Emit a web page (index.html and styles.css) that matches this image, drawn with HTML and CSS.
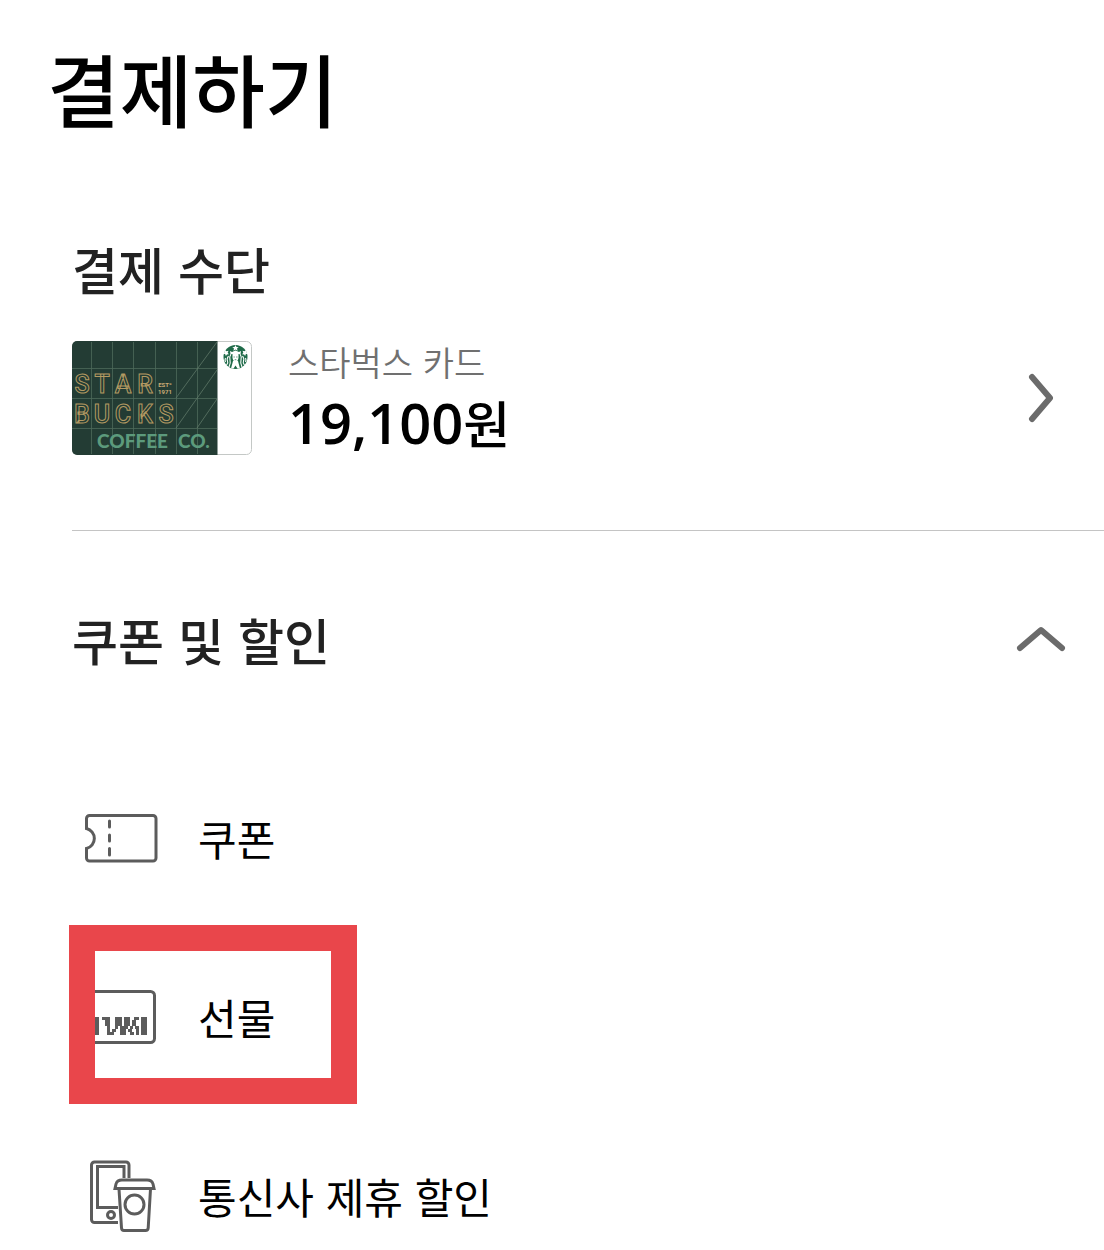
FILE: index.html
```html
<!DOCTYPE html>
<html lang="ko">
<head>
    <meta charset="UTF-8">
    <meta name="viewport" content="width=device-width, initial-scale=1.0">
    <title>결제하기</title>
    <link rel="stylesheet" href="styles.css">
</head>
<body>
    <header class="page-header">
        <h1>결제하기</h1>
    </header>

    <main>
        <section class="payment">
            <h2>결제 수단</h2>
            <a class="payment-method" href="#card">
                <svg class="card" viewBox="0 0 180 114" role="img" aria-label="스타벅스 카드">
                    <rect x="0.5" y="0.5" width="179" height="113" rx="5" fill="#fff" stroke="#c4c8c6"/>
                    <path d="M5 0H145.500V114H5a5 5 0 0 1-5-5V5a5 5 0 0 1 5-5z" fill="#233c34"/>
                    <path d="M19.500 1V113M40.500 1V113M61.500 1V113M83.500 1V113M104.500 1V113M125.500 1V113M0 27.500H145M0 57.500H145M0 87.500H145" stroke="#4c6a5b" stroke-width="0.800"/>
                    <path d="M104 57L145 1M104 87L145 29M125 87L145 58" stroke="#66806f" stroke-width="0.700"/>
                    <text class="card-outline" x="10 30 51 73" y="52">STAR</text>
                    <text class="card-outline" x="10 30 51 73 94" y="82">BUCKS</text>
                    <text class="card-est" x="93" y="46">ESTº</text>
                    <text class="card-est" x="93" y="53">1971</text>
                    <text class="card-coffee" x="25" y="107">COFFEE</text>
                    <text class="card-coffee" x="106" y="107">CO.</text>
                    <!-- siren -->
                    <circle cx="163.500" cy="16" r="12" fill="#1f6b49"/>
                    <g fill="#fff">
                        <path d="M163.500 4l1 2 2.200.2-1.700 1.400.6 2.200-2.100-1.200-2.100 1.200.6-2.200-1.700-1.400 2.200-.2z"/>
                        <path d="M158 10l2 1 3.500-1.500 3.500 1.500 2-1-.5 3h-10z"/>
                        <path d="M160.500 13h6v4q-1 4-3 4t-3-4z"/>
                        <path d="M161 20h5l2 7.500h-2.500l-2-3-2 3H159z"/>
                        <path d="M153 9l1.500 1.200 2-.5-.8 2 1.200 1.600-2 .1-1 1.700-.8-2-2-.4 1.500-1.400zM174 9l-1.500 1.200-2-.5.8 2-1.200 1.600 2 .1 1 1.700.8-2 2-.4-1.500-1.400z"/>
                    </g>
                    <path d="M159 13q-2 3-1 6t-1 7M168 13q2 3 1 6t1 7M156.500 15q-2 3-1 5t-1 4M170.500 15q2 3 1 5t1 4M153.500 17q-1 2 0 4M173.500 17q1 2 0 4" fill="none" stroke="#fff" stroke-width="1.100"/>
                    <path d="M161.500 16h1.300M164.200 16h1.300M162.700 18.700h1.600" stroke="#1f6b49" stroke-width="0.700"/>
                </svg>
                <span class="payment-info">
                    <span class="payment-name">스타벅스 카드</span>
                    <strong class="payment-balance">19,100<span class="won">원</span></strong>
                </span>
                <svg class="arrow-right" viewBox="0 0 26 50" aria-hidden="true">
                    <path d="M4 4L22 25L4 46"/>
                </svg>
            </a>
        </section>

        <section class="discount">
            <div class="discount-header">
                <h2 id="discountTitle">쿠폰 및 할인</h2>
                <button class="toggle" type="button" aria-expanded="true" aria-labelledby="discountTitle">
                    <svg viewBox="0 0 50 26" aria-hidden="true">
                        <path d="M4 22L25 4L46 22"/>
                    </svg>
                </button>
            </div>
            <ul class="discount-list">
                <li>
                    <a href="#coupon">
                        <svg class="icon" viewBox="0 0 90 72" aria-hidden="true">
                            <path d="M17.500 13.500H81a3 3 0 0 1 3 3V56a3 3 0 0 1-3 3H17.500a3 3 0 0 1-3-3V46.500a10.300 10.300 0 0 0 0-20V16.500a3 3 0 0 1 3-3z"/>
                            <path d="M37.500 19V25M37.500 33V39M37.500 46.500V53" stroke-linecap="round"/>
                        </svg>
                        <span>쿠폰</span>
                    </a>
                </li>
                <li class="marked">
                    <a href="#gift">
                        <svg class="icon" viewBox="0 0 90 72" aria-hidden="true">
                            <rect x="12.500" y="10.500" width="70" height="51" rx="4"/>
                            <path class="solid" d="M21 36h6v18h-6zM69 36h6v18h-6z
                                M30 36h8v3h-8zM43 36h7v3h-7zM52 36h6v3h-6zM62 36h5v3h-5z
                                M33 39h5v3h-5zM43 39h7v3h-7zM52 39h6v3h-6zM60 39h4v3h-4z
                                M33 42h5v3h-5zM43 42h7v3h-7zM52 42h6v3h-6zM60 42h4v3h-4z
                                M35 45h3v3h-3zM43 45h3v3h-3zM48 45h8v3h-8zM58 45h3v3h-3zM63 45h4v3h-4z
                                M35 48h3v3h-3zM40 48h4v3h-4zM48 48h6v3h-6zM56 48h4v3h-4zM64 48h3v3h-3z
                                M35 51h7v3h-7zM48 51h6v3h-6zM58 51h4v3h-4zM64 51h3v3h-3z"/>
                        </svg>
                        <span>선물</span>
                    </a>
                </li>
                <li>
                    <a href="#telecom">
                        <svg class="icon" viewBox="0 0 90 72" aria-hidden="true">
                            <path d="M46 62.500H22.500a3 3 0 0 1-3-3V5a3 3 0 0 1 3-3H54a3 3 0 0 1 3 3V18"/>
                            <path d="M52 18V6.500H25.500V47.500H46"/>
                            <circle cx="39" cy="55" r="3.500"/>
                            <path d="M43 28.500L44 24q1-4 6-4H75q5 0 6 4L82 28.500z"/>
                            <path d="M47 29L49.500 68q.2 2.500 2.500 2.500H73.500q2.500 0 2.700-2.500L78.500 29"/>
                            <circle cx="62.500" cy="44.500" r="9.500"/>
                        </svg>
                        <span>통신사 제휴 할인</span>
                    </a>
                </li>
            </ul>
        </section>
    </main>
</body>
</html>
```

FILE: styles.css
```css
*, *::after {
    box-sizing: border-box;
}

body {
    margin: 0;
    background-color: #fff;
    color: #000;
    font-family: "Noto Sans CJK KR", sans-serif;
}

h1, h2 {
    margin: 0;
    font-weight: 500;
}

h1 {
    font-size: 79px;
    line-height: 96px;
}

h2 {
    color: #222;
    font-size: 50px;
    line-height: 60px;
}

a {
    color: inherit;
    text-decoration: none;
}

.page-header {
    padding: 40px 47px 0;
}

.payment {
    margin-left: 72px;
    padding: 102px 50px 72px 0;
    border-bottom: 1px solid #c4c4c4;
}

.payment-method {
    display: flex;
    align-items: center;
    margin-top: 40px;
}

.card {
    width: 180px;
    height: 114px;
    flex-shrink: 0;
}

.card-outline {
    fill: none;
    stroke: #b39a62;
    stroke-width: 1px;
    font-family: Roboto, sans-serif;
    font-size: 25px;
    font-weight: 500;
    text-anchor: middle;
}

.card-est {
    fill: #c9ab74;
    font-family: Roboto, sans-serif;
    font-size: 6px;
    font-weight: bold;
    text-anchor: middle;
}

.card-coffee {
    fill: #5c9a7c;
    font-family: Lato, sans-serif;
    font-size: 19px;
    font-weight: 900;
}

.payment-info {
    display: flex;
    flex: 1;
    flex-direction: column;
    margin-left: 36px;
}

.payment-name {
    color: #707070;
    font-size: 34px;
    font-weight: 350;
    line-height: 48px;
}

.payment-balance {
    font-family: "Open Sans", "Noto Sans CJK KR", sans-serif;
    font-size: 56px;
    font-weight: 600;
    line-height: 72px;
}

.won {
    font-family: "Noto Sans CJK KR", sans-serif;
    font-size: 51px;
    font-weight: 500;
}

.arrow-right,
.toggle svg {
    display: block;
    fill: none;
    stroke: #6b6b6b;
    stroke-width: 6px;
    stroke-linecap: round;
    stroke-linejoin: round;
}

.arrow-right {
    width: 26px;
    height: 50px;
}

.discount {
    padding: 78px 38px 0 72px;
}

.discount-header {
    display: flex;
    align-items: center;
    justify-content: space-between;
}

.toggle {
    padding: 0;
    border: 0;
    background: none;
    cursor: pointer;
}

.toggle svg {
    width: 50px;
    height: 26px;
}

.discount-list {
    display: flex;
    flex-direction: column;
    gap: 107px;
    margin: 133px 0 0;
    padding: 0;
    list-style: none;
}

.discount-list a {
    display: flex;
    align-items: center;
    gap: 36px;
    font-size: 42px;
    font-weight: 400;
    line-height: 72px;
}

.icon {
    width: 90px;
    height: 72px;
    flex-shrink: 0;
    fill: none;
    stroke: #5c5c5c;
    stroke-width: 3px;
}

.icon .solid {
    fill: #5c5c5c;
    stroke: none;
}

.marked {
    position: relative;
}

/* red box around the gift menu */
.marked::after {
    content: "";
    position: absolute;
    top: -56px;
    left: -3px;
    width: 288px;
    height: 179px;
    border: 26px solid #e9464b;
    pointer-events: none;
}
```
